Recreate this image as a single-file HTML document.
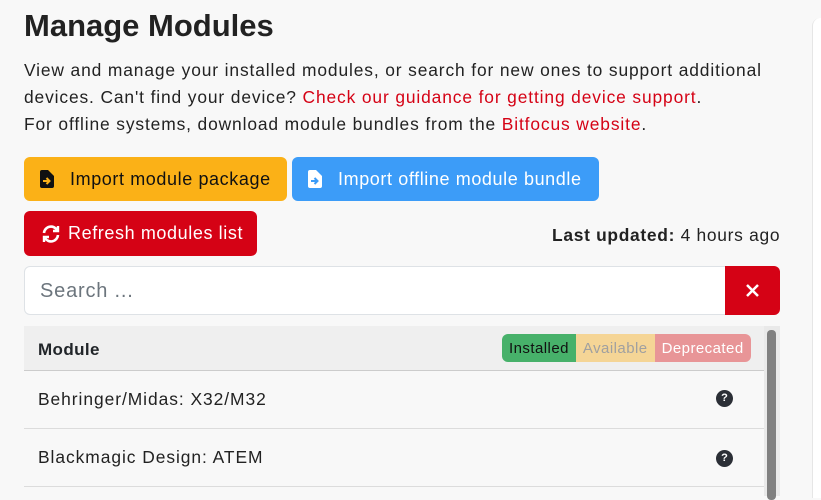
<!DOCTYPE html>
<html><head><meta charset="utf-8"><style>
*{box-sizing:border-box;margin:0;padding:0}
body{width:821px;height:493px;overflow:hidden;background:#f8f8f8;font-family:"Liberation Sans",sans-serif;color:#212529;position:relative}
.panel{position:absolute;left:812px;top:18px;width:20px;height:480px;background:#fff;border-left:1px solid #e6e6e6;border-radius:8px 0 0 0}
h1{position:absolute;left:24px;top:8px;font-size:31px;font-weight:bold;color:#222}
.p{position:absolute;left:24px;top:57px;font-size:17.4px;line-height:27px;color:#222;white-space:nowrap;letter-spacing:0.87px}
.p a{color:#d50215;text-decoration:none}
.btn{position:absolute;height:44px;border-radius:6px;font-size:18px;display:flex;align-items:center;letter-spacing:0.6px}
.y{left:24px;top:157px;width:263px;background:#fbb117;color:#111;padding-left:16px}
.b{left:292px;top:157px;width:307px;background:#3c9cf8;color:#fff;padding-left:16px}
.r{left:24px;top:211px;width:233px;height:45px;background:#d50215;color:#fff;padding-left:17px}
.lu{position:absolute;left:552px;top:225px;font-size:17.4px;color:#222;letter-spacing:0.7px}
.search{position:absolute;left:24px;top:266px;width:702px;height:49px;background:#fff;border:1px solid #dee2e6;border-radius:6px 0 0 6px;font-size:20px;color:#6c757d;padding:13px 15px;letter-spacing:0.8px}
.x{position:absolute;left:725px;top:266px;width:55px;height:49px;background:#d50215;border-radius:0 6px 6px 0}
.hdr{position:absolute;left:24px;top:326px;width:740px;height:45px;background:#efefef;border-bottom:1px solid #ccc;font-weight:bold;font-size:17px;padding:14px 14px;letter-spacing:0.4px}
.tags{position:absolute;left:502px;top:334px;height:28px;display:flex;font-size:15px;border-radius:6px;overflow:hidden;letter-spacing:0.45px}
.tags span{display:flex;align-items:center;padding:0 7px}
.row{position:absolute;left:24px;width:740px;height:58px;border-bottom:1px solid #dcdcdc;font-size:17.4px;padding:18px 14px;color:#222;letter-spacing:0.95px}
.q{position:absolute;left:716px;width:17px;height:17px;border-radius:50%;background:#2b2f36;color:#fff;font-size:11px;font-weight:bold;text-align:center;line-height:17px}
.sb{position:absolute;left:767px;top:330px;width:9px;height:170px;background:#808080;border-radius:4px}
.sbt{position:absolute;left:764px;top:326px;width:16px;height:170px;background:#e9e9e9}
</style></head><body>
<div class="panel"></div>
<h1>Manage Modules</h1>
<div class="p">View and manage your installed modules, or search for new ones to support additional<br>devices. Can't find your device? <a>Check our guidance for getting device support</a>.<br>For offline systems, download module bundles from the <a>Bitfocus website</a>.</div>
<div class="btn y"><svg width="14" height="18" viewBox="0 0 14 18" style="margin-right:16px"><path d="M0 2a2 2 0 0 1 2-2h6l6 6v10a2 2 0 0 1-2 2H2a2 2 0 0 1-2-2z" fill="#111"/><path d="M3 11h6M6.5 8l3 3-3 3" stroke="#fbb117" stroke-width="2" fill="none"/></svg>Import module package</div>
<div class="btn b"><svg width="14" height="18" viewBox="0 0 14 18" style="margin-right:16px"><path d="M0 2a2 2 0 0 1 2-2h6l6 6v10a2 2 0 0 1-2 2H2a2 2 0 0 1-2-2z" fill="#fff"/><path d="M3 11h6M6.5 8l3 3-3 3" stroke="#3c9cf8" stroke-width="2" fill="none"/></svg>Import offline module bundle</div>
<div class="btn r"><svg width="20" height="20" viewBox="0 0 20 20" style="margin-right:7px" fill="none" stroke="#fff" stroke-width="2.6"><path d="M3 9a7 7 0 0 1 13-3"/><path d="M17 11a7 7 0 0 1-13 3"/><path d="M17 2v5h-5M3 18v-5h5" stroke-width="2.4"/></svg>Refresh modules list</div>
<div class="lu"><b>Last updated:</b> 4 hours ago</div>
<div class="search">Search ...</div>
<div class="x"><svg width="55" height="49"><path d="M22 19l11 11M33 19l-11 11" stroke="#fff" stroke-width="2.5"/></svg></div>
<div class="sbt"></div><div class="sb"></div>
<div class="hdr">Module</div>
<div class="tags"><span style="background:#47b16a;color:#111">Installed</span><span style="background:#f5d596;color:#a0a0a0">Available</span><span style="background:#e89597;color:#fff">Deprecated</span></div>
<div class="row" style="top:371px">Behringer/Midas: X32/M32</div>
<div class="q" style="top:390px">?</div>
<div class="row" style="top:429px">Blackmagic Design: ATEM</div>
<div class="q" style="top:450px">?</div>
</body></html>
